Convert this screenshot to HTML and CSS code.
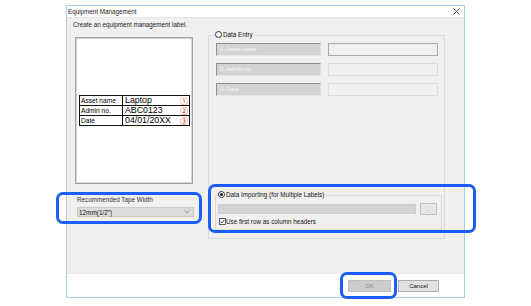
FILE: index.html
```html
<!DOCTYPE html>
<html>
<head>
<meta charset="utf-8">
<link rel="stylesheet" href="styles.css">
</head>
<body>
<div class="dialog">
  <div class="titlebar">
    <span class="title">Equipment Management</span>
    <svg class="close" width="7" height="7" viewBox="0 0 7 7"><path d="M0.5 0.5L6.5 6.5M6.5 0.5L0.5 6.5" stroke="#333" stroke-width="0.9"/></svg>
  </div>
  <div class="body">
    <div class="left">
      <div class="caption">Create an equipment management label.</div>
      <div class="preview">
        <table class="label">
          <tr><td class="k">Asset name</td><td class="v"><div class="vc"><span>Laptop</span><span class="n">①</span></div></td></tr>
          <tr><td class="k">Admin no.</td><td class="v"><div class="vc"><span>ABC0123</span><span class="n">②</span></div></td></tr>
          <tr><td class="k">Date</td><td class="v"><div class="vc"><span>04/01/20XX</span><span class="n">③</span></div></td></tr>
        </table>
      </div>
      <div class="tape-label">Recommended Tape Width</div>
      <div class="select">
        <span class="sel-text">12mm(1/2")</span>
        <svg class="arrow" width="6" height="4" viewBox="0 0 6 4"><path d="M0.5 0.5L3 3L5.5 0.5" fill="none" stroke="#888" stroke-width="0.8"/></svg>
      </div>
    </div>
    <div class="right">
      <div class="group">
        <div class="legend"><span class="radio"></span><span>Data Entry</span></div>
        <div class="fields">
          <div class="row"><div class="in dis">1. Asset name</div><div class="in txt first"></div></div>
          <div class="row"><div class="in dis">2. Admin no.</div><div class="in txt"></div></div>
          <div class="row"><div class="in dis">3. Date</div><div class="in txt"></div></div>
        </div>
        <div class="import">
          <div class="legend leg2"><span class="radio on"></span><span>Data Importing (for Multiple Labels)</span></div>
          <div class="path-row"><div class="path"></div><div class="browse">...</div></div>
          <div class="check">
            <svg class="box" width="7" height="7" viewBox="0 0 7 7"><rect x="0.5" y="0.5" width="6" height="6" fill="#fff" stroke="#333" stroke-width="0.8"/><path d="M1.5 3.6L2.9 5L5.5 1.8" fill="none" stroke="#222" stroke-width="0.9"/></svg>
            <span>Use first row as column headers</span>
          </div>
        </div>
      </div>
    </div>
  </div>
  <div class="footer">
    <div class="btn ok">OK</div>
    <div class="btn cancel">Cancel</div>
  </div>
</div>
<div class="hl hl-tape"></div>
<div class="hl hl-import"></div>
<div class="hl hl-ok"></div>
</body>
</html>
```
FILE: styles.css
```css
body {
  margin: 0;
  width: 531px;
  height: 306px;
  position: relative;
  overflow: hidden;
  background: #fff;
  font-family: "Liberation Sans", Arial, sans-serif;
  font-size: 6.3px;
  color: #222;
}
.dialog {
  margin: 5px 0 0 66px;
  width: 399px;
  height: 293px;
  box-sizing: border-box;
  border: 1px solid #a9cdee;
  display: flex;
  flex-direction: column;
}
.titlebar {
  height: 12px;
  flex: none;
  box-sizing: border-box;
  border-bottom: 1px solid #e4e4e4;
  background: #fff;
  display: flex;
  align-items: center;
  justify-content: space-between;
  padding: 0 4px 0 1px;
}
.title { line-height: 8px; }
.close { display: block; }
.body {
  height: 255px;
  flex: none;
  background: #f0f0f0;
  display: flex;
}
.left {
  width: 141px;
  flex: none;
  display: flex;
  flex-direction: column;
}
.caption {
  margin: 3px 0 0 6px;
  line-height: 7px;
}
.preview {
  margin: 9px 0 0 8px;
  width: 118px;
  height: 147px;
  box-sizing: border-box;
  border: 1px solid #a0a0a0;
  box-shadow: inset 0 0 0 1px #d6d6d6;
  background: #fff;
  padding: 57px 0 0 3px;
}
.label {
  border-collapse: collapse;
  width: 111px;
}
.label td {
  border: 1px solid #111;
  height: 9px;
  padding: 0;
  line-height: 9px;
  color: #000;
}
.label .k {
  width: 41px;
  font-size: 6.6px;
  padding-left: 1px;
}
.label .v {
  font-size: 8.8px;
  padding-left: 2px;
}
.vc {
  display: flex;
  justify-content: space-between;
  align-items: center;
  height: 9px;
}
.label .n {
  color: #e02020;
  font-family: "Noto Sans CJK JP", "DejaVu Sans", sans-serif;
  font-size: 8px;
  line-height: 9px;
  padding-right: 1px;
}
.tape-label {
  margin: 12px 0 0 10px;
  line-height: 7px;
  color: #333;
}
.select {
  margin: 4px 0 0 10px;
  width: 117px;
  height: 10px;
  box-sizing: border-box;
  border: 1px solid #c9c9c9;
  background: #dcdcdc;
  display: flex;
  align-items: center;
  justify-content: space-between;
  padding: 0 3px 0 1px;
}
.sel-text {
  color: #111;
  font-size: 6.4px;
  line-height: 7px;
}
.arrow { display: block; }
.right {
  flex: 1;
}
.group {
  margin: 17px 0 0 0;
  width: 237px;
  height: 204px;
  box-sizing: border-box;
  border: 1px solid #dadada;
  display: flex;
  flex-direction: column;
}
.legend {
  margin: -6px 0 0 6px;
  height: 9px;
  width: fit-content;
  display: flex;
  align-items: center;
  gap: 1px;
  background: #f0f0f0;
  padding-right: 2px;
  color: #111;
}
.radio {
  width: 7px;
  height: 7px;
  box-sizing: border-box;
  border: 1px solid #333;
  border-radius: 50%;
  background: #fff;
  display: flex;
  align-items: center;
  justify-content: center;
}
.radio.on::after {
  content: "";
  width: 3px;
  height: 3px;
  border-radius: 50%;
  background: #222;
}
.fields {
  margin: 4px 0 0 7px;
  display: flex;
  flex-direction: column;
  gap: 7px;
}
.row {
  display: flex;
  gap: 7px;
}
.in {
  height: 13px;
  box-sizing: border-box;
}
.dis {
  width: 105px;
  background: #d4d4d4;
  border-top: 1px solid #8c8c8c;
  border-left: 1px solid #8c8c8c;
  border-right: 1px solid #e4e4e4;
  border-bottom: 1px solid #e4e4e4;
  color: #f4f4f4;
  font-size: 5.8px;
  line-height: 11px;
  padding-left: 3px;
}
.txt {
  width: 110px;
  border: 1px solid #dcdcdc;
  background: #f0f0f0;
}
.txt.first { border-color: #a9a9a9; }
.import {
  margin: 99px 0 0 6px;
  width: 227px;
  height: 35px;
  box-sizing: border-box;
  border: 1px solid #dadada;
  display: flex;
  flex-direction: column;
}
.leg2 { margin-left: 2px; }
.path-row {
  margin: 4px 0 0 2px;
  display: flex;
  align-items: center;
  gap: 4px;
}
.path {
  width: 198px;
  height: 10px;
  background: #d4d4d4;
  border: 1px solid #cdcdcd;
  box-sizing: border-box;
}
.browse {
  width: 17px;
  height: 12px;
  box-sizing: border-box;
  border: 1px solid #c2c2c2;
  background: #e6e6e6;
  color: #888;
  font-size: 5px;
  display: flex;
  align-items: center;
  justify-content: center;
  line-height: 8px;
}
.check {
  margin: 3px 0 0 3px;
  display: flex;
  align-items: center;
  gap: 0;
  color: #111;
}
.box { display: block; }
.footer {
  flex: 1;
  background: #fff;
  border-top: 1px solid #e8e8e8;
  display: flex;
  justify-content: flex-end;
  align-items: flex-start;
  gap: 7px;
  padding: 6px 25px 0 0;
}
.btn {
  height: 12px;
  box-sizing: border-box;
  display: flex;
  align-items: center;
  justify-content: center;
  font-size: 6px;
}
.ok {
  width: 43px;
  background: #cccccc;
  border: 1px solid #bfbfbf;
  color: #8a8a8a;
}
.cancel {
  width: 41px;
  background: #e1e1e1;
  border: 1px solid #adadad;
  color: #111;
}
.hl {
  position: absolute;
  box-sizing: border-box;
  border: 3px solid #1a5ef2;
  border-radius: 7px;
}
.hl-tape { left: 56px; top: 192px; width: 146px; height: 32px; }
.hl-import { left: 208px; top: 184px; width: 268px; height: 49px; }
.hl-ok { left: 340px; top: 272px; width: 57px; height: 27px; }
```
